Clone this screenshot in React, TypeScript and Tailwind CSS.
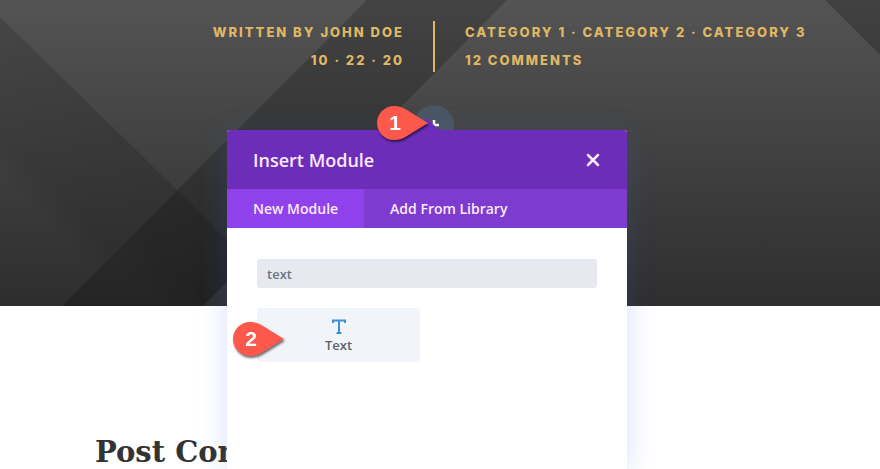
import React from "react";

function Backdrop() {
  return (
    <svg
      className="absolute inset-0 h-full w-full"
      viewBox="0 0 880 306"
      preserveAspectRatio="none"
      aria-hidden="true"
    >
      <defs>
        <linearGradient id="base" x1="0" y1="0" x2="0" y2="1">
          <stop offset="0" stopColor="#545454" />
          <stop offset="1" stopColor="#2e2e2e" />
        </linearGradient>
        <linearGradient id="fold" gradientUnits="userSpaceOnUse" x1="100" y1="117" x2="20" y2="197">
          <stop offset="0" stopColor="#000" stopOpacity="0.15" />
          <stop offset="0.75" stopColor="#000" stopOpacity="0.12" />
          <stop offset="1" stopColor="#000" stopOpacity="0.02" />
        </linearGradient>
        <linearGradient id="band" gradientUnits="userSpaceOnUse" x1="0" y1="0" x2="0" y2="306">
          <stop offset="0" stopColor="#000" stopOpacity="0.2" />
          <stop offset="1" stopColor="#000" stopOpacity="0.22" />
        </linearGradient>
        <linearGradient id="deep" gradientUnits="userSpaceOnUse" x1="190" y1="203" x2="122" y2="271">
          <stop offset="0" stopColor="#000" stopOpacity="0.14" />
          <stop offset="0.6" stopColor="#000" stopOpacity="0.1" />
          <stop offset="1" stopColor="#000" stopOpacity="0" />
        </linearGradient>
      </defs>
      <rect width="880" height="306" fill="url(#base)" />
      <polygon points="0,17 177,190 62,306 0,306" fill="url(#fold)" />
      <polygon points="367,0 507,0 203,306 62,306" fill="url(#band)" />
      <polygon points="177,190 227,240 227,282 203,306 62,306" fill="url(#deep)" />
      <polygon points="825,0 880,0 880,55" fill="#000" fillOpacity="0.22" />
    </svg>
  );
}

function Pin({ label }: { label: string }) {
  return (
    <span className="relative block h-[34px] w-[52px] drop-shadow-[1px_2px_1px_rgba(0,0,0,0.55)]">
      <svg className="absolute inset-0" width="52" height="34" viewBox="0 0 52 34" aria-hidden="true">
        <path
          d="M17 0C7.600 0 0 7.600 0 17s7.600 17 17 17c5 0 9-1.500 13-4L51 17 30 4C26 1.500 22 0 17 0z"
          fill="#fc584c"
        />
      </svg>
      <span className="relative block w-9 text-center font-['Liberation_Sans',Arial,sans-serif] text-[21px] leading-[34px] font-bold text-white">
        {label}
      </span>
    </span>
  );
}

export default function App() {
  return (
    <div className="relative min-h-screen overflow-hidden bg-white font-['Open_Sans','Noto_Sans',sans-serif]">
      <header className="relative h-[306px] overflow-hidden">
        <Backdrop />
        <div className="relative grid grid-cols-2 pt-[21px] pr-[14px] font-['Inter',sans-serif] text-[13px] leading-7 font-extrabold tracking-[2px] text-[#dfb765] uppercase">
          <div className="-mt-[3px] pr-[29px] text-right">
            <p>Written by John Doe</p>
            <p>10 · 22 · 20</p>
          </div>
          <div className="h-[51px] border-l-2 border-[#dfb765] pl-[30px]">
            <div className="-mt-[3px]">
              <p>Category 1 · Category 2 · Category 3</p>
              <p>12 Comments</p>
            </div>
          </div>
        </div>
        <div className="relative flex justify-center pt-[31px] pr-3">
          <button
            type="button"
            aria-label="Add module"
            className="flex size-10 items-center justify-center rounded-full bg-[#4a5662] text-white"
          >
            <svg width="12" height="12" viewBox="0 0 12 12" aria-hidden="true">
              <path d="M6 1v10M1 6h10" stroke="currentColor" strokeWidth="2.500" />
            </svg>
          </button>
        </div>
      </header>

      <main className="px-[95px] pt-32">
        <h1 className="font-['DejaVu_Serif',serif] text-[29px] leading-9 font-bold text-[#333333]">
          Post Content
        </h1>
      </main>

      <div className="absolute inset-x-0 top-[130px] bottom-0 flex justify-center pr-[26px]">
        <section
          role="dialog"
          aria-labelledby="dialog-title"
          className="relative w-[400px] rounded-t-[3px] bg-white shadow-[0_5px_30px_rgba(60,110,200,0.2)]"
        >
          <div className="flex h-[59px] items-center justify-between rounded-t-[3px] bg-[#6c2eb9] px-[26px] text-[#fbe9ff]">
            <h2 id="dialog-title" className="text-[18px] leading-6 font-semibold">
              Insert Module
            </h2>
            <button type="button" aria-label="Close">
              <svg width="16" height="16" viewBox="0 0 16 16" aria-hidden="true">
                <path d="M3 3l10 10M13 3L3 13" stroke="currentColor" strokeWidth="2.500" strokeLinecap="round" />
              </svg>
            </button>
          </div>
          <div role="tablist" className="flex h-[39px] bg-[#7e3bd0] text-[14px] font-semibold text-[#fbe9ff]">
            <button type="button" role="tab" aria-selected="true" className="bg-[#8f42ec] px-[26px]">
              New Module
            </button>
            <button type="button" role="tab" aria-selected="false" className="px-[26px]">
              Add From Library
            </button>
          </div>
          <div className="px-[30px] pt-[31px]">
            <input
              type="text"
              aria-label="Search modules"
              defaultValue="text"
              className="block h-[29px] w-full rounded-[3px] bg-[#e6eaf0] px-[10px] text-[13px] font-semibold text-[#6b7480] outline-none"
            />
            <button
              type="button"
              className="mt-5 flex h-[54px] w-[163px] flex-col items-center rounded-[3px] bg-[#f1f4f9] pt-[11px] text-[13px] leading-5 font-semibold text-[#59636e]"
            >
              <svg width="14" height="16" viewBox="0 0 14 16" aria-hidden="true">
                <path d="M1 4V1.500h12V4M7 1.500v12.500M4.500 14h5" fill="none" stroke="#3d8fd1" strokeWidth="2" />
              </svg>
              Text
            </button>
          </div>
          <svg className="absolute -top-3 left-[187px]" width="26" height="13" viewBox="0 0 26 13" aria-hidden="true">
            <path d="M0 13L13 0l13 13z" fill="#6c2eb9" />
          </svg>
          <div className="absolute -top-6 left-[150px]">
            <Pin label="1" />
          </div>
          <div className="absolute top-[192px] left-[6px]">
            <Pin label="2" />
          </div>
        </section>
      </div>
    </div>
  );
}
